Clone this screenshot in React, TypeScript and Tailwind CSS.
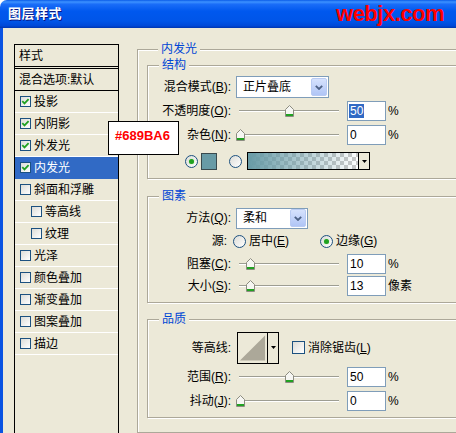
import clsx from "clsx";
import type { ReactNode } from "react";

const items = [
  { t: "投影", c: true },
  { t: "内阴影", c: true },
  { t: "外发光", c: true },
  { t: "内发光", c: true, sel: true },
  { t: "斜面和浮雕" },
  { t: "等高线", ind: true },
  { t: "纹理", ind: true },
  { t: "光泽" },
  { t: "颜色叠加" },
  { t: "渐变叠加" },
  { t: "图案叠加" },
  { t: "描边" },
];

function Check({ on, big }: { on?: boolean; big?: boolean }) {
  return (
    <span
      className={clsx(
        "shrink-0 border border-[#1C5180] bg-[linear-gradient(135deg,#DCDCD7,#FFFFFF)] flex items-center justify-center",
        big ? "w-[13px] h-[13px]" : "w-[11px] h-[11px]"
      )}
    >
      {on && (
        <svg width="9" height="9" viewBox="0 0 9 9">
          <path d="M1.3 4.2 L3.5 6.4 L7.6 2.2" fill="none" stroke="#21A121" strokeWidth="1.8" />
        </svg>
      )}
    </span>
  );
}

function Radio({ on }: { on?: boolean }) {
  return (
    <span className="w-[13px] h-[13px] shrink-0 rounded-full border border-[#1C5180] bg-[linear-gradient(135deg,#DCDCD7,#FFFFFF)] flex items-center justify-center">
      {on && <span className="w-[5px] h-[5px] rounded-full bg-[#21A121] shadow-[0_0_1px_#7EE07E]" />}
    </span>
  );
}

function Slider({ v }: { v: number }) {
  return (
    <div className="relative w-[104px] h-[14px] shrink-0">
      <div className="absolute left-[3px] top-[6px] w-[100px] h-[2px] border-t border-b border-t-[#9D9D92] border-b-white" />
      <svg className="absolute top-[1px]" style={{ left: Math.round(v * 0.98) }} width="9" height="12" viewBox="0 0 9 12">
        <path d="M0.5 4.5 L4.5 0.5 L8.5 4.5 V11.5 H0.5 Z" fill="#F6F6F2" stroke="#8C8C80" />
        <rect x="1" y="9" width="7" height="2" fill="#21A121" />
      </svg>
    </div>
  );
}

function Field({ val, sel }: { val: string; sel?: boolean }) {
  return (
    <div className="ml-[7px] w-[39px] h-[20px] shrink-0 border border-[#7F9DB9] bg-white flex items-center pl-[1px]">
      <span className={clsx("px-[1px] leading-[14px]", sel && "bg-[#316AC5] text-white")}>{val}</span>
    </div>
  );
}

function DropBtn() {
  return (
    <span className="w-[16px] h-[18px] rounded-[2px] border border-[#B9CBF3] bg-[linear-gradient(to_bottom,#D6E2FD,#B0C5F6)] flex items-center justify-center">
      <svg width="8" height="5" viewBox="0 0 8 5">
        <path d="M0.8 0.8 L4 4 L7.2 0.8" fill="none" stroke="#4D6185" strokeWidth="1.8" />
      </svg>
    </span>
  );
}

function Arrow() {
  return (
    <svg width="5" height="3" viewBox="0 0 5 3">
      <path d="M0 0 H5 L2.5 3 Z" fill="#000" />
    </svg>
  );
}

function Group({ title, className, children }: { title: string; className?: string; children: ReactNode }) {
  return (
    <fieldset className={clsx("border border-[#ACA899] shadow-[inset_1px_1px_0_#fff,1px_1px_0_#fff]", className)}>
      <legend className="ml-[11px] px-[3px] leading-[14px] text-[#0046D5] bg-[#ECE9D8]">{title}</legend>
      {children}
    </fieldset>
  );
}

export default function App() {
  return (
    <div className="relative w-[456px] h-[433px] overflow-hidden bg-white text-[12px] leading-[14px] text-black [font-family:'Liberation_Sans','Noto_Sans_CJK_SC',sans-serif]">
      {/* title bar */}
      <div className="h-[28px] flex items-center justify-between pl-[8px] pr-[12px] rounded-tl-[7px] bg-[linear-gradient(to_bottom,#0A5CE8_0%,#3D92FF_7%,#1A6DF8_15%,#0058EE_40%,#0055E8_75%,#0049D8_92%,#0036B0_100%)]">
        <span className="text-white font-bold text-[13px] tracking-[0.5px] [text-shadow:1px_1px_0_#0A1883]">图层样式</span>
        <span className="text-[#FF0000] font-bold text-[22px] leading-[24px] tracking-[-0.5px]">webjx.com</span>
      </div>

      <div className="h-[405px] flex bg-[#ECE9D8] border-l-[3px] border-[#0A53E2]">
        {/* style list */}
        <div className="ml-[11px] mt-[16px] w-[105px] h-[400px] shrink-0 border border-black">
          <div className="h-[22px] border-b border-black pl-[4px] flex items-center">样式</div>
          <div className="mt-[1px] h-[23px] border-t border-b border-black pl-[4px] flex items-center">混合选项:默认</div>
          {items.map((it) => (
            <div
              key={it.t}
              className={clsx(
                "h-[22px] border-b flex items-center",
                it.sel ? "bg-[#316AC5] text-white border-[#316AC5]" : "border-white",
                it.ind ? "pl-[16px]" : "pl-[5px]"
              )}
            >
              <Check on={it.c} />
              <span className="ml-[3px]">{it.t}</span>
            </div>
          ))}
        </div>

        {/* settings */}
        <Group title="内发光" className="ml-[18px] mt-[14px] w-[340px] shrink-0 pl-[9px] pb-[30px]">
          <Group title="结构" className="mt-[2px] w-[320px]">
            <div className="pt-[3px] pb-[3px]">
              <div className="flex items-center h-[24px]">
                <span className="w-[83px] text-right shrink-0">混合模式(<u>B</u>):</span>
                <div className="ml-[5px] w-[93px] h-[22px] border border-[#7F9DB9] bg-white flex items-center justify-between pl-[6px] pr-px">
                  <span>正片叠底</span>
                  <DropBtn />
                </div>
              </div>
              <div className="flex items-center h-[24px]">
                <span className="w-[83px] text-right shrink-0">不透明度(<u>O</u>):</span>
                <div className="ml-[5px]"><Slider v={50} /></div>
                <Field val="50" sel />
                <span className="ml-[2px]">%</span>
              </div>
              <div className="flex items-center h-[24px]">
                <span className="w-[83px] text-right shrink-0">杂色(<u>N</u>):</span>
                <div className="ml-[5px]"><Slider v={0} /></div>
                <Field val="0" />
                <span className="ml-[2px]">%</span>
              </div>
              <div className="flex items-center h-[28px] pl-[37px]">
                <Radio on />
                <span className="ml-[3px] w-[16px] h-[17px] border border-[#3A4A4E] bg-[#689BA6]" />
                <span className="ml-[12px]"><Radio /></span>
                <div className="ml-[5px] w-[123px] h-[18px] border border-black flex">
                  <div className="flex-1 [background-image:linear-gradient(to_right,#689BA6,rgba(104,155,166,0)),repeating-conic-gradient(#C8C8C8_0_25%,#FFFFFF_0_50%)] [background-size:100%_100%,8px_8px]" />
                  <div className="w-[11px] border-l border-black bg-[#ECE9D8] flex items-center justify-center">
                    <Arrow />
                  </div>
                </div>
              </div>
            </div>
          </Group>

          <Group title="图素" className="mt-[10px] w-[320px]">
            <div className="pt-[4px] pb-[5px]">
              <div className="flex items-center h-[22px]">
                <span className="w-[83px] text-right shrink-0">方法(<u>Q</u>):</span>
                <div className="ml-[5px] w-[72px] h-[21px] border border-[#7F9DB9] bg-white flex items-center justify-between pl-[6px] pr-px">
                  <span>柔和</span>
                  <DropBtn />
                </div>
              </div>
              <div className="flex items-center h-[24px]">
                <span className="w-[79px] text-right shrink-0">源:</span>
                <span className="ml-[6px]"><Radio /></span>
                <span className="ml-[3px]">居中(<u>E</u>)</span>
                <span className="ml-[31px]"><Radio on /></span>
                <span className="ml-[3px]">边缘(<u>G</u>)</span>
              </div>
              <div className="flex items-center h-[22px]">
                <span className="w-[83px] text-right shrink-0">阻塞(<u>C</u>):</span>
                <div className="ml-[5px]"><Slider v={10} /></div>
                <Field val="10" />
                <span className="ml-[2px]">%</span>
              </div>
              <div className="flex items-center h-[22px]">
                <span className="w-[83px] text-right shrink-0">大小(<u>S</u>):</span>
                <div className="ml-[5px]"><Slider v={10} /></div>
                <Field val="13" />
                <span className="ml-[2px]">像素</span>
              </div>
            </div>
          </Group>

          <Group title="品质" className="mt-[9px] w-[320px]">
            <div className="pt-[5px] pb-[5px]">
              <div className="flex items-center h-[33px]">
                <span className="w-[83px] text-right shrink-0">等高线:</span>
                <div className="ml-[6px] w-[42px] h-[32px] border border-black flex">
                  <svg className="flex-1" width="30" height="30" viewBox="0 0 30 30">
                    <path d="M2 28 L28 2 V28 Z" fill="#ACA899" />
                  </svg>
                  <div className="w-[11px] border-l border-black flex items-center justify-center">
                    <Arrow />
                  </div>
                </div>
                <span className="ml-[13px]"><Check big /></span>
                <span className="ml-[3px]">消除锯齿(<u>L</u>)</span>
              </div>
              <div className="flex items-center h-[26px]">
                <span className="w-[83px] text-right shrink-0">范围(<u>R</u>):</span>
                <div className="ml-[5px]"><Slider v={50} /></div>
                <Field val="50" />
                <span className="ml-[2px]">%</span>
              </div>
              <div className="flex items-center h-[22px]">
                <span className="w-[83px] text-right shrink-0">抖动(<u>J</u>):</span>
                <div className="ml-[5px]"><Slider v={0} /></div>
                <Field val="0" />
                <span className="ml-[2px]">%</span>
              </div>
            </div>
          </Group>
        </Group>
      </div>

      {/* colour tag */}
      <div className="absolute left-[108px] top-[121px] w-[71px] h-[34px] border border-black bg-white pl-[6px] pt-[7px]">
        <span className="text-[#FF0000] font-bold text-[13px] leading-[14px]">#689BA6</span>
      </div>
    </div>
  );
}
